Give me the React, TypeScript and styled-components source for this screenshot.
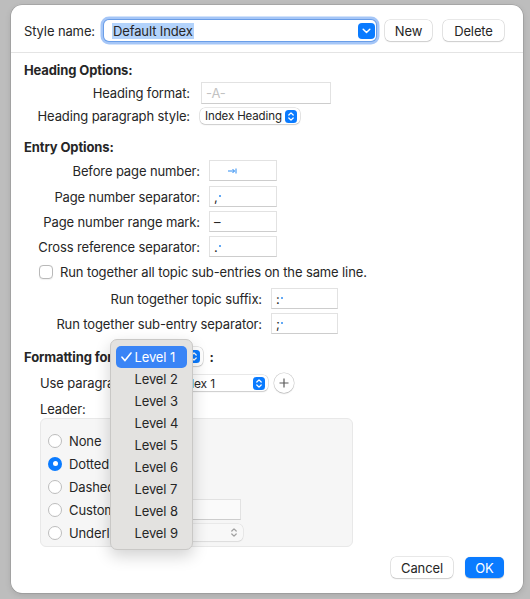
import styled, { createGlobalStyle } from "styled-components";

const GlobalStyle = createGlobalStyle`
  html, body {
    margin: 0;
    padding: 0;
  }
  body {
    background: #bdbdbd;
    font-family: Inter, "Liberation Sans", sans-serif;
    font-size: 13px;
    letter-spacing: -0.12px;
    color: #262626;
  }
`;

const Screen = styled.div`
  width: 530px;
  height: 599px;
  box-sizing: border-box;
  padding: 5px 8px 6px 11px;
  display: flex;
`;

const Card = styled.div`
  flex: 1;
  background: #fff;
  border-radius: 11px;
  box-shadow: 0 0 0 0.5px rgba(0, 0, 0, 0.18), 0 2px 6px rgba(0, 0, 0, 0.12);
  display: flex;
  flex-direction: column;
  position: relative;
`;

const Header = styled.div`
  height: 48px;
  box-sizing: border-box;
  padding: 4px 19px 0 13px;
  border-bottom: 1px solid #e4e4e4;
  display: flex;
  align-items: center;
`;

const Label = styled.span`
  white-space: nowrap;
`;

const Combo = styled.div`
  margin-left: 9px;
  width: 272px;
  height: 21px;
  box-sizing: border-box;
  border-radius: 5px;
  background: #fff;
  box-shadow: 0 0 0 1px #6a9ee8, 0 0 0 3.5px rgba(40, 120, 235, 0.42);
  display: flex;
  align-items: center;
  padding: 0 1px 0 8px;
`;

const Selected = styled.span`
  background: #b3d3fb;
  padding: 0 1px;
  line-height: 16px;
  font-size: 13px;
`;

const ComboArrow = styled.span`
  margin-left: auto;
  width: 17px;
  height: 16px;
  border-radius: 4px;
  background: #0a7bff;
  display: flex;
  align-items: center;
  justify-content: center;
`;

const PushButton = styled.button<{ $w: number; $primary?: boolean }>`
  width: ${(p) => p.$w}px;
  height: 21px;
  padding: 0;
  border: none;
  border-radius: 5px;
  font-family: inherit;
  font-size: 13px;
  letter-spacing: inherit;
  color: ${(p) => (p.$primary ? "#fff" : "#262626")};
  background: ${(p) => (p.$primary ? "#0a7bff" : "#fff")};
  box-shadow: ${(p) =>
    p.$primary
      ? "0 0.5px 1px rgba(0,0,0,0.2)"
      : "0 0 0 0.5px rgba(0,0,0,0.18), 0 1px 1.5px rgba(0,0,0,0.12)"};
`;

const HeaderButtons = styled.div`
  display: flex;
  gap: 11px;
  margin-left: 9px;
`;

const Body = styled.div`
  padding: 0 19px 0 13px;
  display: flex;
  flex-direction: column;
`;

const Title = styled.div<{ $mt: number }>`
  height: 18px;
  line-height: 18px;
  margin-top: ${(p) => p.$mt}px;
  font-weight: 700;
`;

const FieldRow = styled.div<{ $label: number; $gap: number; $mt: number; $h: number }>`
  display: grid;
  grid-template-columns: ${(p) => p.$label}px auto;
  column-gap: ${(p) => p.$gap}px;
  align-items: center;
  justify-content: start;
  height: ${(p) => p.$h}px;
  margin-top: ${(p) => p.$mt}px;
  & > ${Label} {
    text-align: right;
  }
`;

const TextField = styled.div<{ $w: number; $h?: number; $disabled?: boolean }>`
  width: ${(p) => p.$w}px;
  height: ${(p) => p.$h ?? 21}px;
  box-sizing: border-box;
  background: ${(p) => (p.$disabled ? "#fafafa" : "#fff")};
  border: 1px solid #e2e2e2;
  border-bottom-color: #cdcdcd;
  display: flex;
  align-items: center;
  padding: 0 4px;
  font-size: 13px;
`;

const Placeholder = styled.span`
  color: #c2c2c2;
  font-size: 13px;
`;

const SpaceDot = styled.span`
  display: inline-block;
  width: 2px;
  height: 2px;
  border-radius: 1px;
  background: #2f8df2;
  margin-left: 1px;
  position: relative;
  top: -1px;
`;

const Popup = styled.div<{ $w: number; $h: number; $disabled?: boolean; $font?: number }>`
  width: ${(p) => p.$w}px;
  height: ${(p) => p.$h}px;
  box-sizing: border-box;
  border-radius: 5px;
  background: ${(p) => (p.$disabled ? "#f8f8f8" : "#fff")};
  box-shadow: 0 0 0 0.5px rgba(0, 0, 0, ${(p) => (p.$disabled ? 0.1 : 0.18)}),
    0 1px 1.5px rgba(0, 0, 0, ${(p) => (p.$disabled ? 0.06 : 0.12)});
  display: flex;
  align-items: center;
  padding: 0 3px 0 5px;
  font-size: ${(p) => p.$font ?? 11.5}px;
  white-space: nowrap;
  & > svg {
    margin-left: auto;
  }
`;

const CheckRow = styled.div`
  height: 18px;
  margin-top: 6px;
  padding-left: 15px;
  display: flex;
  align-items: center;
  gap: 7px;
`;

const CheckBox = styled.span`
  width: 14px;
  height: 14px;
  box-sizing: border-box;
  border-radius: 4px;
  border: 1px solid #b9b9b9;
  background: #fff;
  box-shadow: 0 0.5px 1px rgba(0, 0, 0, 0.06);
`;

const FormatRow = styled.div`
  height: 19px;
  margin-top: 13px;
  display: flex;
  align-items: center;
`;

const Bold = styled.span`
  font-weight: 700;
`;

const PopupAnchor = styled.div`
  position: relative;
  margin-left: 5px;
`;

const Colon = styled.span`
  margin-left: 6px;
  font-weight: 700;
`;

const Menu = styled.div`
  position: absolute;
  left: -7px;
  top: -8px;
  width: 83px;
  box-sizing: border-box;
  padding: 6px 5px 5px;
  background: #e3e2e0;
  border: 1px solid #c9c8c6;
  border-radius: 7px;
  box-shadow: 0 6px 16px rgba(0, 0, 0, 0.18);
  z-index: 5;
`;

const MenuItem = styled.div<{ $active?: boolean }>`
  height: 22px;
  border-radius: 5px;
  display: flex;
  align-items: center;
  padding-left: 18px;
  position: relative;
  font-size: 13px;
  color: ${(p) => (p.$active ? "#fff" : "#262626")};
  background: ${(p) => (p.$active ? "#3984f6" : "transparent")};
  & > svg {
    position: absolute;
    left: 5px;
    top: 6px;
  }
`;

const IndentRow = styled.div<{ $mt: number; $h: number }>`
  height: ${(p) => p.$h}px;
  margin-top: ${(p) => p.$mt}px;
  padding-left: 16px;
  display: flex;
  align-items: center;
`;

const CircleButton = styled.span`
  width: 20px;
  height: 20px;
  border-radius: 50%;
  margin-left: 6px;
  background: #fff;
  box-shadow: 0 0 0 0.5px rgba(0, 0, 0, 0.2), 0 1px 1.5px rgba(0, 0, 0, 0.12);
  display: flex;
  align-items: center;
  justify-content: center;
`;

const GroupBox = styled.div`
  margin-left: 16px;
  width: 313px;
  height: 129px;
  box-sizing: border-box;
  background: #f6f6f6;
  border: 1px solid #e8e8e8;
  border-radius: 6px;
  padding: 10px 0 0 7px;
`;

const RadioRow = styled.div`
  height: 23px;
  display: grid;
  grid-template-columns: 21px 64px auto;
  align-items: center;
`;

const Radio = styled.span<{ $on?: boolean }>`
  width: 14px;
  height: 14px;
  box-sizing: border-box;
  border-radius: 50%;
  background: ${(p) => (p.$on ? "#0a7bff" : "#fff")};
  border: ${(p) => (p.$on ? "none" : "1px solid #bdbdbd")};
  display: flex;
  align-items: center;
  justify-content: center;
  &::after {
    content: "";
    display: ${(p) => (p.$on ? "block" : "none")};
    width: 5px;
    height: 5px;
    border-radius: 50%;
    background: #fff;
  }
`;

const Footer = styled.div`
  margin-top: auto;
  padding: 0 19px 15px;
  display: flex;
  justify-content: flex-end;
  gap: 12px;
`;

const Stepper = ({ disabled }: { disabled?: boolean }) => (
  <svg width="12" height="13" viewBox="0 0 12 13">
    {!disabled && <rect width="12" height="13" rx="3.5" fill="#0a7bff" />}
    <path
      d="M3.8 5 L6 2.9 L8.2 5 M3.8 8 L6 10.1 L8.2 8"
      stroke={disabled ? "#a0a0a0" : "#fff"}
      strokeWidth="1.3"
      fill="none"
      strokeLinecap="round"
      strokeLinejoin="round"
    />
  </svg>
);

const TabMark = () => (
  <svg width="9" height="6" viewBox="0 0 9 6" style={{ marginLeft: 14 }}>
    <path d="M0 3 H6.5 M4.5 1 L6.5 3 L4.5 5 M8 0.5 V5.5" stroke="#2f8df2" strokeWidth="1" fill="none" />
  </svg>
);

const levels = ["Level 1", "Level 2", "Level 3", "Level 4", "Level 5", "Level 6", "Level 7", "Level 8", "Level 9"];

const entryRows: { label: string; value: React.ReactNode; mt: number }[] = [
  { label: "Before page number:", value: <TabMark />, mt: 4 },
  { label: "Page number separator:", value: <>,<SpaceDot /></>, mt: 5 },
  { label: "Page number range mark:", value: "–", mt: 4 },
  { label: "Cross reference separator:", value: <>.<SpaceDot /></>, mt: 4 },
];

const leaders = ["None", "Dotted", "Dashed", "Custom", "Underline"];

export default function App() {
  return (
    <>
      <GlobalStyle />
      <Screen>
        <Card>
          <Header>
            <Label>Style name:</Label>
            <Combo>
              <Selected>Default Index</Selected>
              <ComboArrow>
                <svg width="9" height="6" viewBox="0 0 9 6">
                  <path d="M1.2 1.3 L4.5 4.5 L7.8 1.3" stroke="#fff" strokeWidth="1.5" fill="none" strokeLinecap="round" strokeLinejoin="round" />
                </svg>
              </ComboArrow>
            </Combo>
            <HeaderButtons>
              <PushButton $w={47}>New</PushButton>
              <PushButton $w={61}>Delete</PushButton>
            </HeaderButtons>
          </Header>

          <Body>
            <Title $mt={8}>Heading Options:</Title>
            <FieldRow $label={166} $gap={11} $mt={3} $h={22}>
              <Label>Heading format:</Label>
              <TextField $w={130} $h={22}>
                <Placeholder>-A-</Placeholder>
              </TextField>
            </FieldRow>
            <FieldRow $label={166} $gap={10} $mt={4} $h={16}>
              <Label>Heading paragraph style:</Label>
              <Popup $w={100} $h={16}>
                Index Heading
                <Stepper />
              </Popup>
            </FieldRow>

            <Title $mt={14}>Entry Options:</Title>
            {entryRows.map((row) => (
              <FieldRow key={row.label} $label={176} $gap={9} $mt={row.mt} $h={21}>
                <Label>{row.label}</Label>
                <TextField $w={68}>{row.value}</TextField>
              </FieldRow>
            ))}

            <CheckRow>
              <CheckBox />
              <Label>Run together all topic sub-entries on the same line.</Label>
            </CheckRow>
            <FieldRow $label={238} $gap={9} $mt={7} $h={21}>
              <Label>Run together topic suffix:</Label>
              <TextField $w={67}>
                :<SpaceDot />
              </TextField>
            </FieldRow>
            <FieldRow $label={238} $gap={9} $mt={4} $h={21}>
              <Label>Run together sub-entry separator:</Label>
              <TextField $w={67}>
                ;<SpaceDot />
              </TextField>
            </FieldRow>

            <FormatRow>
              <Bold>Formatting for</Bold>
              <PopupAnchor>
                <Popup $w={86} $h={19} $font={13}>
                  Level 1
                  <Stepper />
                </Popup>
                <Menu>
                  {levels.map((level, i) => (
                    <MenuItem key={level} $active={i === 0}>
                      {i === 0 && (
                        <svg width="11" height="10" viewBox="0 0 11 10">
                          <path d="M1 5.2 L4 8.6 L10 1" stroke="#fff" strokeWidth="1.6" fill="none" strokeLinecap="round" strokeLinejoin="round" />
                        </svg>
                      )}
                      {level}
                    </MenuItem>
                  ))}
                </Menu>
              </PopupAnchor>
              <Colon>:</Colon>
            </FormatRow>

            <IndentRow $mt={7} $h={20}>
              <Label>Use paragraph style:</Label>
              <Popup $w={96} $h={16} $font={12} style={{ marginLeft: 6 }}>
                Index 1
                <Stepper />
              </Popup>
              <CircleButton>
                <svg width="10" height="10" viewBox="0 0 10 10">
                  <path d="M5 0.5 V9.5 M0.5 5 H9.5" stroke="#5a5a5a" strokeWidth="1.2" />
                </svg>
              </CircleButton>
            </IndentRow>
            <IndentRow $mt={7} $h={18}>
              <Label>Leader:</Label>
            </IndentRow>
            <GroupBox>
              {leaders.map((name) => (
                <RadioRow key={name}>
                  <Radio $on={name === "Dotted"} />
                  <Label>{name}</Label>
                  {name === "Custom" && <TextField $w={108} $disabled />}
                  {name === "Underline" && (
                    <Popup $w={110} $h={17} $disabled>
                      <Stepper disabled />
                    </Popup>
                  )}
                </RadioRow>
              ))}
            </GroupBox>
          </Body>

          <Footer>
            <PushButton $w={62}>Cancel</PushButton>
            <PushButton $w={39} $primary>
              OK
            </PushButton>
          </Footer>
        </Card>
      </Screen>
    </>
  );
}
